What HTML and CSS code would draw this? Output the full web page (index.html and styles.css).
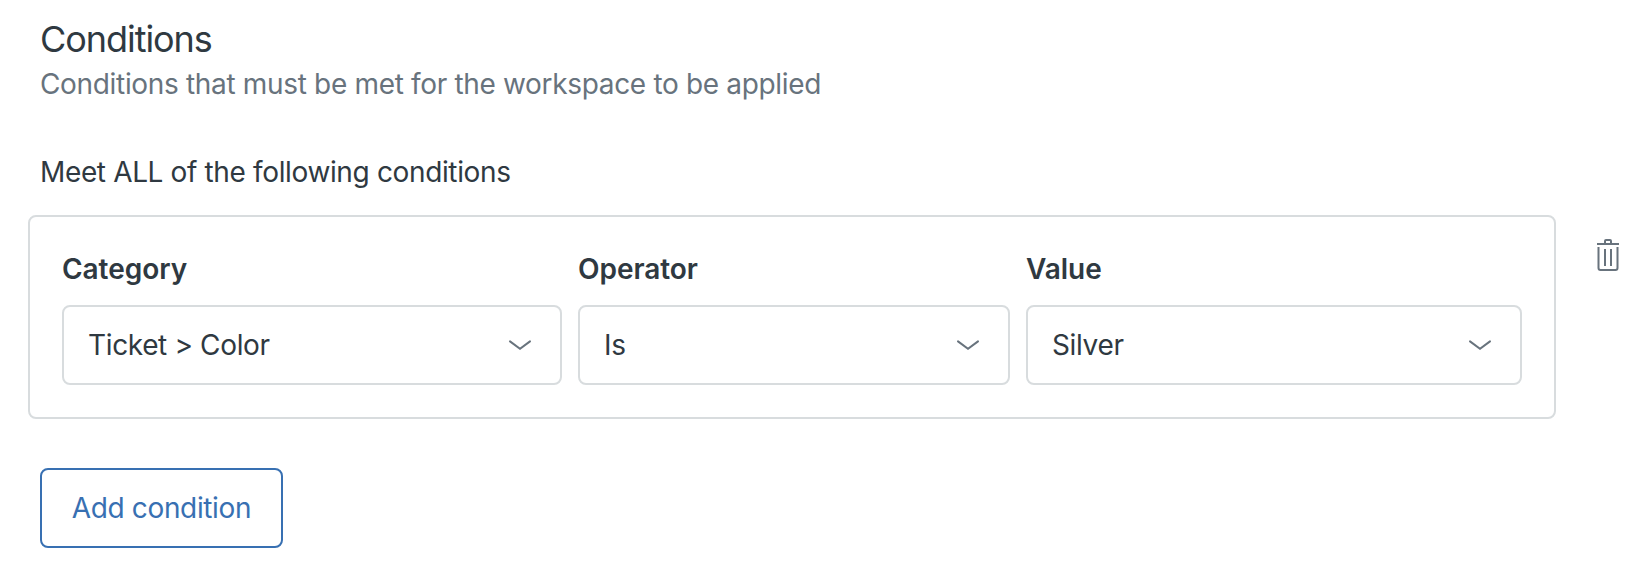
FILE: index.html
```html
<!DOCTYPE html>
<html lang="en">
<head>
  <meta charset="UTF-8">
  <title>Conditions</title>
  <meta name="viewport" content="width=device-width, initial-scale=1.0">
  <link rel="stylesheet" href="styles.css">
</head>
<body>

<section class="conditions">
  <h2 class="title">Conditions</h2>
  <p class="description">Conditions that must be met for the workspace to be applied</p>

  <h3 class="subtitle">Meet ALL of the following conditions</h3>

  <div class="row">
    <div class="card">
      <div class="field">
        <div class="label">Category</div>
        <div class="select" role="combobox" tabindex="0">
          <span>Ticket &gt; Color</span>
          <svg class="chevron" viewBox="0 0 24 12"><path d="M2 2.4l10 7.4 10-7.4"/></svg>
        </div>
      </div>
      <div class="field">
        <div class="label">Operator</div>
        <div class="select" role="combobox" tabindex="0">
          <span>Is</span>
          <svg class="chevron" viewBox="0 0 24 12"><path d="M2 2.4l10 7.4 10-7.4"/></svg>
        </div>
      </div>
      <div class="field">
        <div class="label">Value</div>
        <div class="select" role="combobox" tabindex="0">
          <span>Silver</span>
          <svg class="chevron" viewBox="0 0 24 12"><path d="M2 2.4l10 7.4 10-7.4"/></svg>
        </div>
      </div>
    </div>
    <button class="delete" aria-label="Delete condition">
      <svg class="trash" viewBox="0 0 32 32">
        <path d="M5 5h22M13 4V2a1 1 0 0 1 1-1h4a1 1 0 0 1 1 1v2"/>
        <path d="M6.5 8v21a2 2 0 0 0 2 2h15a2 2 0 0 0 2-2V8M13 10v17M19 10v17"/>
      </svg>
    </button>
  </div>

  <button class="add">Add condition</button>
</section>

</body>
</html>
```

FILE: styles.css
```css
* { box-sizing: border-box; }
body {
  margin: 0;
  background: #fff;
  color: #2f3941;
  font-family: Inter, "Liberation Sans", sans-serif;
  font-size: 28px;
  font-weight: 430;
  font-feature-settings: "calt" 0;
  line-height: 40px;
  letter-spacing: -0.36px;
}
.conditions {
  padding: 17px 10px 20px 28px;
}
.title, .description, .subtitle {
  margin: 0 0 0 12px;
  font-weight: 430;
}
.title {
  font-size: 36px;
  line-height: 44px;
  letter-spacing: -1.05px;
}
.description {
  margin-top: 3px;
  color: #68737d;
  letter-spacing: -0.33px;
}
.subtitle {
  margin-top: 48px;
  font-size: 28px;
}
.row {
  display: flex;
  align-items: flex-start;
  gap: 36px;
  margin-top: 23px;
}
.card {
  display: grid;
  grid-template-columns: 500px 432px 496px;
  gap: 16px;
  width: 1528px;
  height: 204px;
  padding: 32px;
  border: 2px solid #d8dcde;
  border-radius: 8px;
}
.label {
  margin-bottom: 16px;
  font-weight: 600;
  letter-spacing: -0.05px;
}
.select {
  display: flex;
  align-items: center;
  justify-content: space-between;
  height: 80px;
  padding: 0 28px 0 24px;
  border: 2px solid #d8dcde;
  border-radius: 8px;
}
.chevron {
  width: 24px;
  height: 12px;
}
.chevron, .trash {
  fill: none;
  stroke: #68737d;
  stroke-width: 2;
  stroke-linecap: round;
}
.delete {
  margin-top: 24px;
  padding: 0;
  border: none;
  background: none;
  cursor: pointer;
}
.trash {
  display: block;
  width: 32px;
  height: 32px;
  stroke-linecap: butt;
}
.add {
  display: block;
  width: 243px;
  height: 80px;
  margin: 49px 0 0 12px;
  padding: 0;
  border: 2px solid #3870b2;
  border-radius: 8px;
  background: #fff;
  color: #3870b2;
  font: inherit;
  letter-spacing: -0.36px;
  cursor: pointer;
}
```
